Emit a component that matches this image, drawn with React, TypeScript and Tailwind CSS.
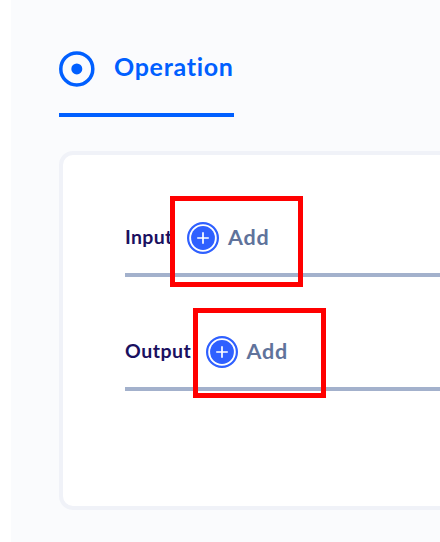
interface FieldProps {
  label: string;
  labelClass: string;
  frameClass: string;
}

function TargetIcon() {
  return (
    <svg className="size-9 shrink-0" viewBox="0 0 36 36" fill="none">
      <circle cx="17.8" cy="17.9" r="16" stroke="#005fff" strokeWidth="3.5" />
      <circle cx="17.8" cy="17.9" r="5.5" fill="#005fff" />
    </svg>
  );
}

function PlusIcon() {
  return (
    <svg className="size-8 shrink-0" viewBox="0 0 32 32" fill="none">
      <circle cx="16" cy="16" r="14.9" stroke="#2f60ff" strokeWidth="2.2" />
      <circle cx="16" cy="16" r="11.9" fill="#2f60ff" />
      <path d="M16 10.2v11.6M10.2 16h11.6" stroke="white" strokeWidth="1.7" />
    </svg>
  );
}

function Field({ label, labelClass, frameClass }: FieldProps) {
  return (
    <div className="relative flex h-[114px] items-end border-b-[4px] border-[#a3b1cc] pb-[19px]">
      <div className="flex h-8 items-center">
        <span className={`shrink-0 whitespace-nowrap pb-[2px] text-[19.5px] font-bold leading-[30px] text-[#1a105f] ${labelClass}`}>{label}</span>
        <PlusIcon />
        <button className="ml-[9px] whitespace-nowrap pb-[2px] text-[21.5px] font-bold leading-[30px] tracking-[0.8px] text-[#60739b]">
          Add
        </button>
      </div>
      <div className={`absolute w-[133px] border-[5px] border-[#ff0000] ${frameClass}`} />
    </div>
  );
}

export default function App() {
  return (
    <div className="h-[542px] w-[440px] overflow-hidden bg-white pl-[11px] font-['Lato','Open_Sans',sans-serif]">
      <main className="h-full bg-[#fafbfd] pl-12 pt-[51px]">
        <div className="flex h-[66px] w-[175px] items-start border-b-[4px] border-[#005fff]">
          <TargetIcon />
          <h1 className="ml-[19px] whitespace-nowrap text-[25px] font-bold leading-[30px] tracking-[0.7px] text-[#005fff]">Operation</h1>
        </div>
        <section className="mt-[34px] h-[359px] w-[450px] rounded-[14px] border-4 border-[#f0f2f8] bg-white pl-[62px] pt-[8px]">
          <Field label="Input" labelClass="w-[62px] tracking-[0.35px]" frameClass="left-[45px] top-[33px] h-[91px]" />
          <Field label="Output" labelClass="w-[80.5px] tracking-[0.5px]" frameClass="left-[68px] top-[31px] h-[90px]" />
        </section>
      </main>
    </div>
  );
}
